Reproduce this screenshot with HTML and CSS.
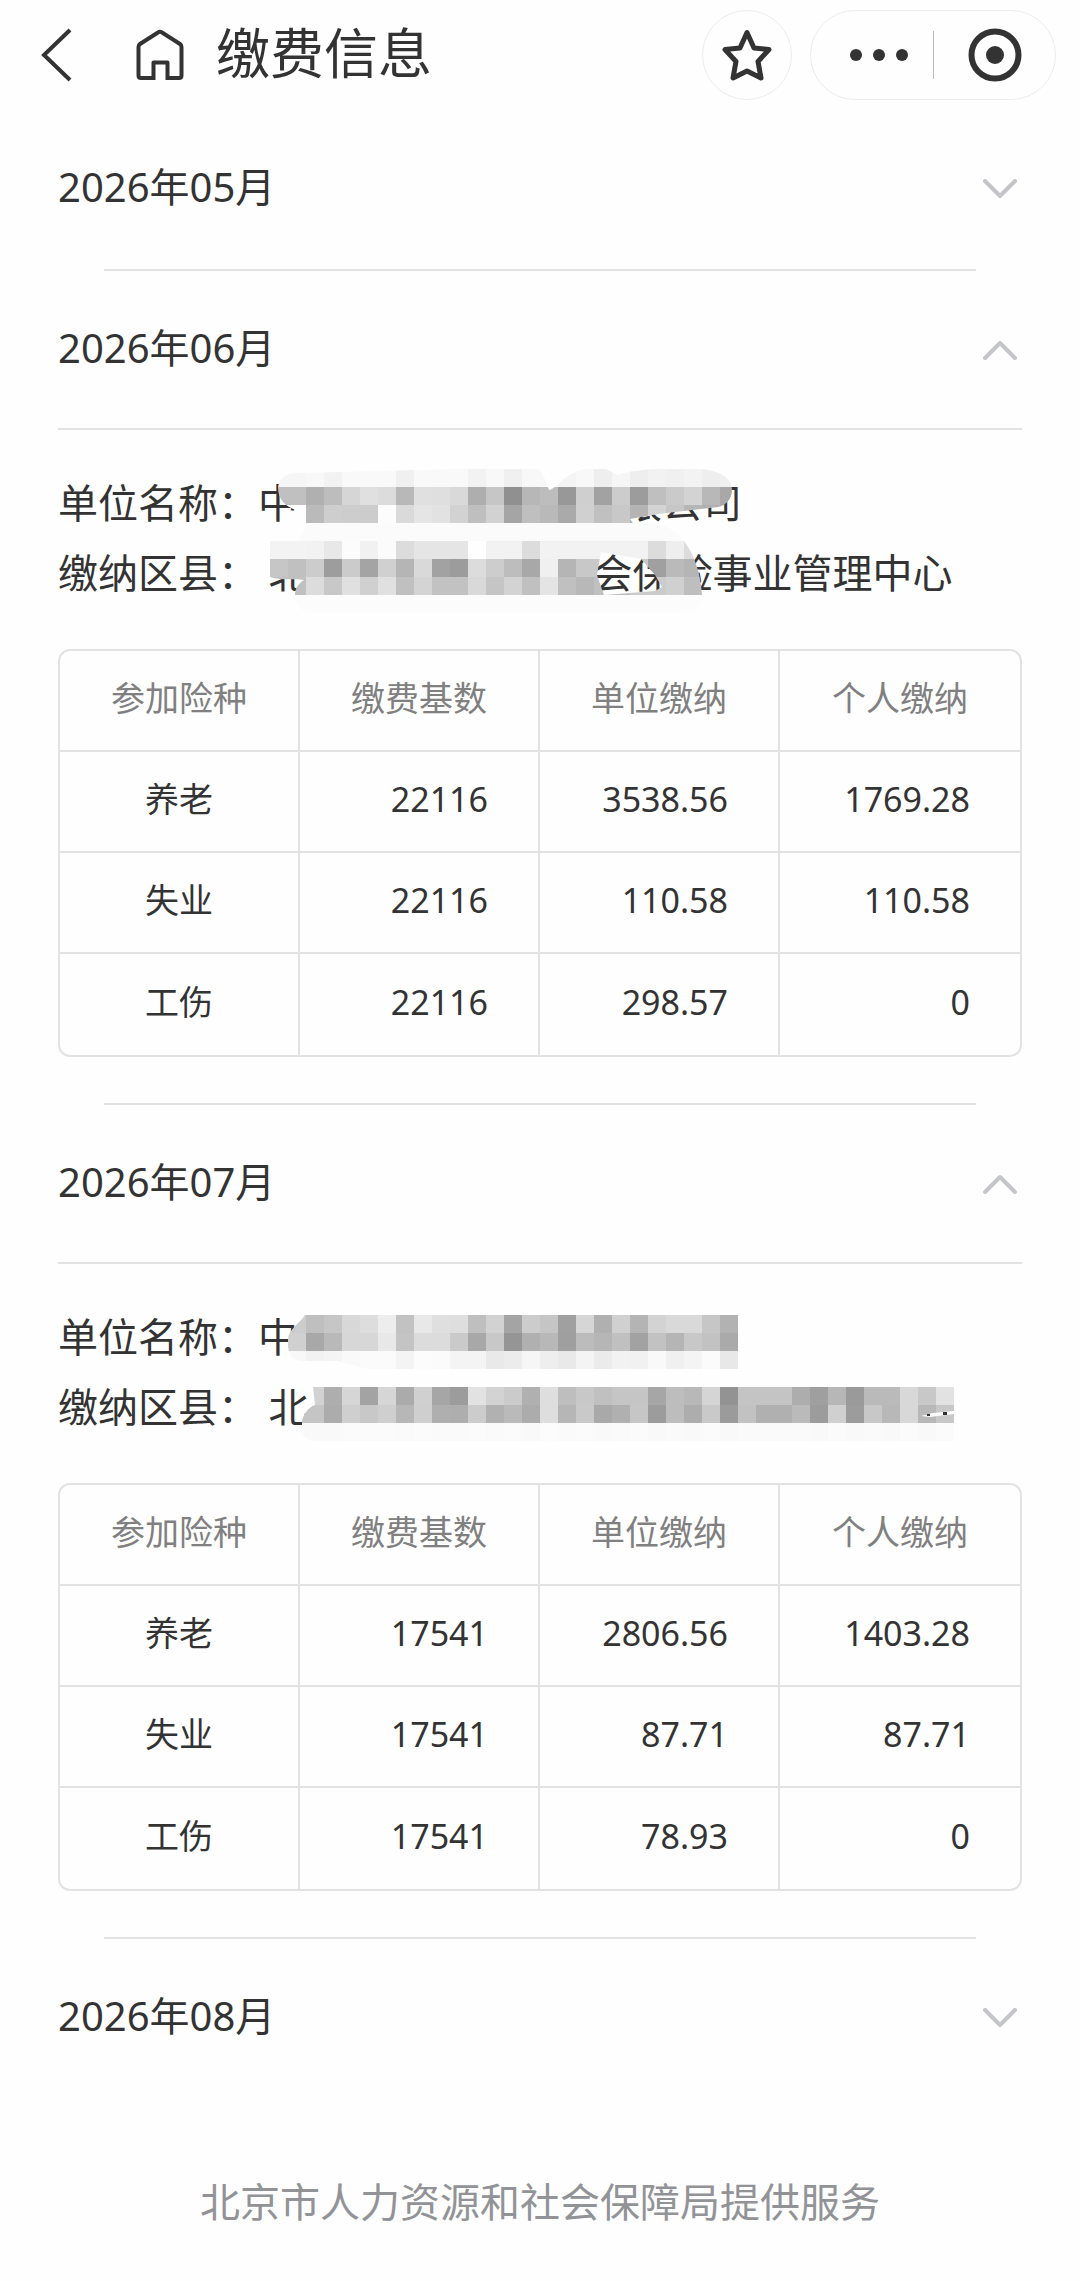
FILE: index.html
```html
<!DOCTYPE html>
<html lang="zh-CN">
<head>
    <meta charset="UTF-8">
    <meta name="viewport" content="width=device-width, initial-scale=1.0">
    <title>缴费信息</title>
    <link rel="stylesheet" href="styles.css">
</head>
<body>
    <header class="navbar">
        <button class="icon-btn back-btn" aria-label="返回">
            <svg width="34" height="54" viewBox="0 0 34 54" fill="none" stroke="#333" stroke-width="4"><path d="M30 2 4 27l26 25"/></svg>
        </button>
        <button class="icon-btn home-btn" aria-label="首页">
            <svg width="48" height="52" viewBox="0 0 48 52" fill="none" stroke="#333" stroke-width="4" stroke-linejoin="round"><path d="M17.5 49H5q-2.500 0-2.500-2.500V18q0-2 1.500-3L22 3.500q2-1.500 4 0L44 15q1.500 1 1.500 3v28.500q0 2.500-2.500 2.500H31.500V33.500h-14V51M31.500 51v-2"/></svg>
        </button>
        <h1>缴费信息</h1>
        <button class="icon-btn star-btn" aria-label="收藏">
            <svg width="50" height="52" viewBox="0 0 50 52" fill="none" stroke="#333" stroke-width="5" stroke-linejoin="round"><path d="m25 3.500 7 15.500 15 1.500-11 12 3 16.500-14-7-14 7 3-16.500-11-12L18 19z"/></svg>
        </button>
        <div class="capsule">
            <button class="icon-btn more-btn" aria-label="更多">
                <svg width="58" height="12" viewBox="0 0 58 12" fill="#333"><circle cx="6" cy="6" r="6"/><circle cx="29" cy="6" r="6"/><circle cx="52" cy="6" r="6"/></svg>
            </button>
            <button class="icon-btn close-btn" aria-label="关闭">
                <svg width="54" height="54" viewBox="0 0 54 54"><circle cx="27" cy="27" r="23.500" fill="none" stroke="#333" stroke-width="6"/><circle cx="27" cy="27" r="9" fill="#333"/></svg>
            </button>
        </div>
    </header>

    <main>
        <section class="month">
            <button class="month-title" aria-expanded="false">
                <span>2026年05月</span>
                <svg class="arrow" width="34" height="20" viewBox="0 0 34 20"><path d="m2 2 15 15L32 2"/></svg>
            </button>
        </section>

        <section class="month">
            <button class="month-title" aria-expanded="true">
                <span>2026年06月</span>
                <svg class="arrow" width="34" height="20" viewBox="0 0 34 20"><path d="m2 18L17 3l15 15"/></svg>
            </button>
            <div class="month-body">
                <p>单位名称：中<span class="gap-name"></span>限公司</p>
                <p>缴纳区县： 北<span class="gap-area"></span>会保险事业管理中心</p>
                <svg class="mosaic" width="964" height="216" viewBox="0 0 964 216">
                    <defs>
                        <clipPath id="june-name"><path d="M220 57C222 46 230 43 240 43L400 39H480C485 42 489 55 491 60 497 60 505 45 525 39H548L560 45C575 39 600 38 640 39 662 40 674 48 674 60 674 68 668 76 660 77L600 84 572 89 575 93H240L248 83C235 80 220 75 220 57Z"/></clipPath>
                        <clipPath id="june-area"><path clip-rule="evenodd" d="M212 111V147C225 151 240 148 246 150 240 154 237 158 237 165 237 176 245 183 255 183H625C640 183 645 175 644 164 643 140 630 93 590 93H250L240 111ZM539 145 543 122 583 129 597 145 604 157 597 161 546 165Z"/></clipPath>
                    </defs>
                    <g clip-path="url(#june-name)" data-x="212" data-y="39" data-rows="f6 f6 f8 f2 f9 f9 f9 f0 f9 f9 f9 f2 f8 f0 f8 f8 f4 f8 ee f6 ee f2 f0 f3 ee f0/c0 c0 b0 bd d6 e0 dc b8 e0 df d9 ae c6 90 b7 bd 98 cf a2 cc 9c bf ca d3 b8 a8/fe fe ba ce cd cc fc da e5 e2 d2 bf d2 a5 bf b9 aa d0 c0 c8 b4 d4 c6 b6 b0 b0"></g>
                    <g clip-path="url(#june-area)" data-x="212" data-y="93" data-rows="fb fb fb fb fb fb fb fb fb fb fb fb fb fb fb fb fb fb fb fb fb fb fb fb/f3 f3 f2 e8 fc f1 fb dc e5 e5 e5 fe f2 f2 dc f2 f2 f2 f2 f2 f2 dc ee dc/c6 c0 cc 9d cb a4 d0 b5 d9 a2 9c dc cd bd a8 f0 b5 c8 c8 c8 c8 a0 ba b5/c0 c0 dc c8 e0 d0 e0 c0 d4 c2 c2 d9 c5 d3 c0 e4 c0 b8 c0 c0 cb cb d0 be/fc fc fc fc fc fc fc fc fc fc fc fc fc fc fc fc fc fc fc fc fc fc fc fc"></g>
                </svg>
                <table>
                    <thead>
                        <tr><th>参加险种</th><th>缴费基数</th><th>单位缴纳</th><th>个人缴纳</th></tr>
                    </thead>
                    <tbody>
                        <tr><td>养老</td><td>22116</td><td>3538.56</td><td>1769.28</td></tr>
                        <tr><td>失业</td><td>22116</td><td>110.58</td><td>110.58</td></tr>
                        <tr><td>工伤</td><td>22116</td><td>298.57</td><td>0</td></tr>
                    </tbody>
                </table>
            </div>
        </section>

        <section class="month">
            <button class="month-title" aria-expanded="true">
                <span>2026年07月</span>
                <svg class="arrow" width="34" height="20" viewBox="0 0 34 20"><path d="m2 18L17 3l15 15"/></svg>
            </button>
            <div class="month-body">
                <p>单位名称：中</p>
                <p>缴纳区县： 北</p>
                <svg class="mosaic" width="964" height="216" viewBox="0 0 964 216">
                    <defs>
                        <clipPath id="july-name"><path d="M247 51C243 58 230 66 230 75 229 90 234 97 245 97H280L310 105H680V51Z"/></clipPath>
                        <clipPath id="july-area"><path clip-rule="evenodd" d="M255 123 257 141C250 143 244 152 244 159V165C245 174 250 177 260 177H896V123ZM863 152 875 149 896 147V150L872 153Z"/></clipPath>
                    </defs>
                    <g clip-path="url(#july-name)" data-x="230" data-y="51" data-rows="cc bf c6 d8 dd ed c2 e8 df de bf d2 a4 cc c5 a0 d6 b0 d0 b4 d3 d9 d9 c6 b2/d0 a8 b9 d7 d7 e8 c4 dc dc ca a8 c8 95 b0 b8 9f bc b6 c0 a2 c2 b5 c8 c2 aa/f8 f2 f4 f9 fb fb f4 fc fb f4 f4 e9 ec f6 ee e9 f4 eb f2 f1 f9 f0 f4 fb e8"></g>
                    <g clip-path="url(#july-area)" data-x="230" data-y="123" data-rows="d2 d2 ae d6 a3 d6 ab d0 a6 9c e2 d3 cb b0 de be c8 c0 c5 c5 a6 bd b8 d5 93 c4 c4 c4 ad 9f b7 9a ba ba d8 c8 e2/c5 c5 ac cf c8 cf b7 cf af ae cc b1 ba ac de b6 c9 a9 b0 c6 9c bd ad c9 9b c2 b0 b0 ba 9c d0 9c c8 b8 d8 b8 c8/f9 f9 f9 fb fb fb fa fb fa fa fb fa fb f9 fc fa fb f9 fa fb f9 fa f9 fb f9 fa fa fa fa f9 fb f9 fa f9 fb f9 fb"></g>
                    <g fill="#333"><rect x="869" y="150" width="3" height="2"/><rect x="885" y="148" width="4" height="3"/></g>
                </svg>
                <table>
                    <thead>
                        <tr><th>参加险种</th><th>缴费基数</th><th>单位缴纳</th><th>个人缴纳</th></tr>
                    </thead>
                    <tbody>
                        <tr><td>养老</td><td>17541</td><td>2806.56</td><td>1403.28</td></tr>
                        <tr><td>失业</td><td>17541</td><td>87.71</td><td>87.71</td></tr>
                        <tr><td>工伤</td><td>17541</td><td>78.93</td><td>0</td></tr>
                    </tbody>
                </table>
            </div>
        </section>

        <section class="month">
            <button class="month-title" aria-expanded="false">
                <span>2026年08月</span>
                <svg class="arrow" width="34" height="20" viewBox="0 0 34 20"><path d="m2 2 15 15L32 2"/></svg>
            </button>
        </section>
    </main>

    <footer>北京市人力资源和社会保障局提供服务</footer>

    <script>
        const CELL = 18;

        // each row is a list of grey levels, one per cell
        document.querySelectorAll(".mosaic g[data-rows]").forEach((group) => {
            const left = Number(group.dataset.x);
            const top = Number(group.dataset.y);
            group.dataset.rows.split("/").forEach((row, r) => {
                row.split(" ").forEach((grey, c) => {
                    const rect = document.createElementNS("http://www.w3.org/2000/svg", "rect");
                    rect.setAttribute("x", left + c * CELL);
                    rect.setAttribute("y", top + r * CELL);
                    rect.setAttribute("width", CELL);
                    rect.setAttribute("height", CELL);
                    rect.setAttribute("fill", `#${grey}${grey}${grey}`);
                    group.appendChild(rect);
                });
            });
        });
    </script>
</body>
</html>
```
FILE: styles.css
```css
* {
    box-sizing: border-box;
}

body {
    margin: 0;
    background: #fefefe;
    color: #333;
    font-family: "Noto Sans", "Noto Sans CJK SC", sans-serif;
    font-size: 40px;
}

button {
    padding: 0;
    border: none;
    background: none;
    color: inherit;
    font: inherit;
    cursor: pointer;
}

/* Top bar */
.navbar {
    display: flex;
    align-items: center;
    height: 110px;
    padding: 0 24px 0 40px;
}

.icon-btn {
    display: flex;
    align-items: center;
    justify-content: center;
}

.home-btn {
    margin-left: 62px;
}

h1 {
    flex: 1;
    margin: 0 0 0 32px;
    padding-bottom: 4px;
    font-size: 54px;
    font-weight: 400;
    line-height: 80px;
}

.star-btn {
    width: 90px;
    height: 90px;
    border: 1px solid #ececec;
    border-radius: 50%;
}

.capsule {
    display: flex;
    align-items: center;
    width: 246px;
    height: 90px;
    margin-left: 18px;
    padding-left: 14px;
    border: 1px solid #ececec;
    border-radius: 45px;
}

.capsule .icon-btn {
    height: 48px;
}

.more-btn {
    width: 108px;
}

.close-btn {
    flex: 1;
    border-left: 1px solid #bbb;
}

/* Month list */
main {
    padding: 0 58px;
}

.month + .month::before {
    content: "";
    display: block;
    height: 2px;
    margin: 0 46px;
    background: #e2e2e2;
}

.month-title {
    display: flex;
    align-items: center;
    justify-content: space-between;
    width: 100%;
    height: 159px;
    padding-right: 5px;
    border-bottom: 2px solid transparent;
}

.month-title[aria-expanded="true"] {
    border-bottom-color: #e2e2e2;
}

.month-title span {
    padding-bottom: 8px;
}

.arrow {
    fill: none;
    stroke: #c4c5c8;
    stroke-width: 4;
    stroke-linecap: round;
    stroke-linejoin: round;
}

.month-body {
    position: relative;
    padding: 38px 0 46px;
}

.month-body p {
    margin: 0;
    line-height: 70px;
    white-space: nowrap;
}

.gap-name,
.gap-area {
    display: inline-block;
    width: 324px;
}

.gap-area {
    width: 284px;
}

/* lies over the company and district text */
.mosaic {
    position: absolute;
    top: 0;
    left: 0;
    shape-rendering: crispEdges;
}

table {
    width: 100%;
    margin-top: 41px;
    border: 2px solid #e2e2e2;
    border-radius: 12px;
    border-spacing: 0;
    table-layout: fixed;
    font-size: 34px;
}

th,
td {
    height: 101px;
    padding: 0 50px 6px 0;
    border-right: 2px solid #e2e2e2;
    border-bottom: 2px solid #e2e2e2;
    font-weight: 400;
    line-height: 50px;
    text-align: right;
    white-space: nowrap;
}

th,
td:first-child {
    padding-right: 0;
    text-align: center;
}

th {
    color: #808080;
}

th:last-child,
td:last-child {
    border-right: none;
}

tbody tr:last-child td {
    border-bottom: none;
}

footer {
    padding: 74px 0 48px;
    color: #929397;
    line-height: 60px;
    text-align: center;
}
```
